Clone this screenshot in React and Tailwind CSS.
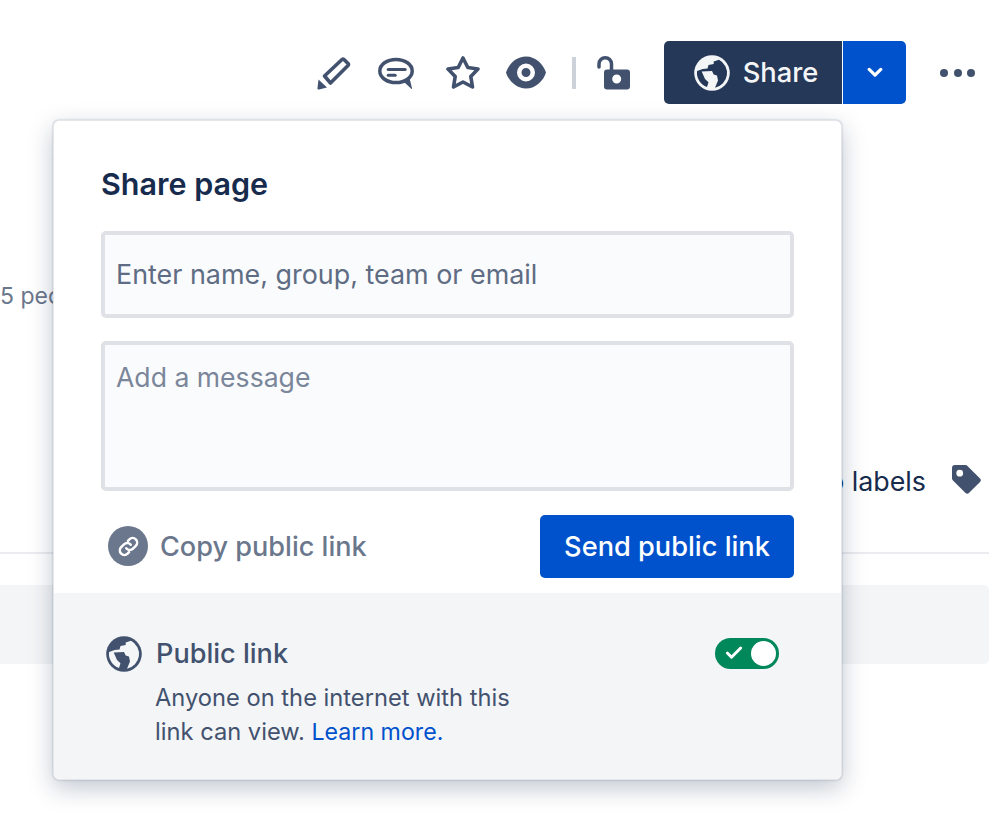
import { Check } from 'lucide-react';

function Globe({ className, land }) {
  // disc in currentColor, the lighter channel between the continents on top
  return (
    <svg viewBox="0 0 36 36" className={className}>
      <circle cx="18" cy="18" r="17.800" fill="currentColor" />
      <path
        fill={land}
        d="M25 4.700A15 15 0 0 1 21 32.700L24 25.600 23 20.400 19.700 19.400 18 16 7.700 16.500 11 24 14.500 27.300 13 32.100A15 15 0 0 1 3.100 16L8.700 14 13.500 13.500 14.500 10 19.700 9 19.700 6.600Z"
      />
    </svg>
  );
}

function ToolbarIcons() {
  return (
    <div className="flex items-center text-[#42526e]">
      <svg viewBox="0 0 34 34" className="w-[34px] h-[34px] ml-[317px]">
        <path fill="none" stroke="currentColor" strokeWidth="3.600" strokeLinejoin="round" d="M7.500 20 25 3.500a1.500 1.500 0 0 1 2 0l4 4a1.500 1.500 0 0 1 0 2L13.500 27z" />
        <path fill="currentColor" d="M1.500 23.500 10 31.500 2 33.500a1.200 1.200 0 0 1-1.500-1.500z" />
      </svg>
      <svg viewBox="0 0 36 34" className="w-[36px] h-[34px] ml-[27px]">
        <ellipse cx="18" cy="15" rx="16.200" ry="11.600" fill="none" stroke="currentColor" strokeWidth="3.500" />
        <path fill="currentColor" d="M25 25 33.500 33a.6.6 0 0 0 .5-.8L31.500 22z" />
        <rect x="8.700" y="12" width="20" height="3" rx="1.500" fill="currentColor" />
        <rect x="8.700" y="17.700" width="10" height="3" rx="1.500" fill="currentColor" />
      </svg>
      <svg viewBox="0 0 34 34" className="w-[34px] h-[34px] ml-[32px]">
        <path fill="none" stroke="currentColor" strokeWidth="3.600" strokeLinejoin="round" d="M17 2 21.800 11.500 32 13 24.800 20.500 26.500 31 17 26 7.500 31 9.200 20.500 2 13 12.200 11.500Z" />
      </svg>
      <svg viewBox="0 0 40 33" className="w-[40px] h-[33px] ml-[26px]">
        <path fill="currentColor" fillRule="evenodd" d="M20 .5c10 0 17.500 8 20 16-2.500 8-10 16-20 16s-17.500-8-20-16c2.500-8 10-16 20-16zm0 7a9 9 0 1 0 0 18 9 9 0 0 0 0-18zm0 4.500a4.500 4.500 0 1 1 0 9 4.500 4.500 0 0 1 0-9z" />
      </svg>
      <div className="w-[4px] h-[32px] ml-[26px] bg-[#ccd1da]" />
      <svg viewBox="0 0 33 34" className="w-[33px] h-[34px] ml-[21px]">
        <path fill="none" stroke="currentColor" strokeWidth="3.500" strokeLinecap="round" d="M2 11V8a6.200 6.200 0 0 1 12.500 0v6" />
        <path fill="currentColor" fillRule="evenodd" d="M10 13.500h20a3 3 0 0 1 3 3v14a3 3 0 0 1-3 3H10a3 3 0 0 1-3-3v-14a3 3 0 0 1 3-3zm9.700 5a4.500 4.500 0 1 0 0 9 4.500 4.500 0 0 0 0-9z" />
      </svg>
    </div>
  );
}

export default function App() {
  return (
    <div className="relative w-[999px] h-[822px] overflow-hidden bg-white font-['Inter',sans-serif]">
      {/* Toolbar */}
      <div className="flex items-center h-[63px] mt-[41px]">
        <ToolbarIcons />
        <button className="flex items-center justify-center gap-[13px] w-[178px] h-[63px] ml-[34px] pl-[6px] rounded-l-[5px] bg-[#253858] text-[#f4f5f7] text-[27.300px] font-medium">
          <Globe className="w-[36px] h-[36px] text-[#f4f5f7]" land="#253858" />
          <span className="mt-[2px]">Share</span>
        </button>
        <button className="flex items-center justify-center w-[63px] h-[63px] ml-[1px] rounded-r-[5px] bg-[#0052cc]">
          <svg viewBox="0 0 18 12" className="w-[16px] h-[11px]">
            <path fill="none" stroke="white" strokeWidth="3.600" strokeLinecap="round" strokeLinejoin="round" d="M2.500 2.500 9 9l6.500-6.500" />
          </svg>
        </button>
        <div className="flex gap-[5.500px] ml-[34px]">
          <span className="w-[8px] h-[8px] rounded-full bg-[#42526e]" />
          <span className="w-[8px] h-[8px] rounded-full bg-[#42526e]" />
          <span className="w-[8px] h-[8px] rounded-full bg-[#42526e]" />
        </div>
      </div>

      {/* Page content behind the popover */}
      <div className="pr-[10px]">
        <p className="mt-[178px] text-[23px] leading-[28px] text-[#6b778c]">5 people</p>
        <div className="flex items-center justify-end mt-[154px] h-[36px]">
          <span className="mt-[-2px] text-[26.800px] text-[#172b4d]">No labels</span>
          <svg viewBox="0 0 30 30" className="w-[29px] h-[29px] ml-[26px] mr-[8px] mt-[-5px]">
            <path fill="#42526e" fillRule="evenodd" d="M3 0h11a3 3 0 0 1 2 1l13 13a2.500 2.500 0 0 1 0 3.500L17.500 29a2.500 2.500 0 0 1-3.500 0L1 16a3 3 0 0 1-1-2V3a3 3 0 0 1 3-3zm5 5a3.500 3.500 0 1 0 0 7 3.500 3.500 0 0 0 0-7z" />
          </svg>
        </div>
        <div className="h-[2px] mt-[52px] bg-[#ebecf0]" />
        <div className="h-[79px] mt-[31px] rounded-r-[5px] bg-[#f4f5f7]" />
      </div>

      {/* Share popover */}
      <div className="absolute left-[53px] top-[120px] w-[789px] h-[660px] flex flex-col rounded-[6px] overflow-hidden bg-white border border-[#e4e6ea] shadow-[0_8px_24px_rgba(9,30,66,0.25),0_0_2px_rgba(9,30,66,0.31)]">
        <div className="flex-1 px-[47px]">
          <h2 className="mt-[43px] text-[30.500px] leading-[40px] font-semibold text-[#172b4d]">Share page</h2>
          <div className="flex items-center h-[87px] mt-[27px] px-[11px] rounded-[5px] border-[4px] border-[#dfe1e6] bg-[#fafbfc] text-[26.900px] text-[#5e6c84]">
            Enter name, group, team or email
          </div>
          <div className="h-[150px] mt-[23px] px-[11px] pt-[14px] rounded-[5px] border-[4px] border-[#dfe1e6] bg-[#fafbfc] text-[26.600px] leading-[36px] text-[#7a869a]">
            Add a message
          </div>
          <div className="flex items-center justify-between h-[63px] mt-[24px]">
            <div className="flex items-center gap-[12px] pl-[7px] text-[#6b778c]">
              <span className="flex items-center justify-center w-[40px] h-[40px] rounded-full bg-[#6b778c]">
                <svg viewBox="0 0 24 24" className="w-[27px] h-[27px]" fill="none" stroke="white" strokeWidth="2.200" strokeLinecap="round" strokeLinejoin="round">
                  <path d="M10 13.500a4 4 0 0 0 6 .4l2.500-2.500a4 4 0 0 0-5.700-5.700l-1.300 1.300" />
                  <path d="M14 10.500a4 4 0 0 0-6-.4l-2.500 2.500a4 4 0 0 0 5.700 5.700l1.300-1.300" />
                </svg>
              </span>
              <span className="mt-[2px] text-[27.100px] font-medium">Copy public link</span>
            </div>
            <button className="w-[254px] h-[63px] pt-[1px] rounded-[5px] bg-[#0052cc] text-white text-[27.200px] font-medium">
              Send public link
            </button>
          </div>
        </div>

        <div className="h-[186px] bg-[#f4f5f7] pl-[51px] pr-[62px] pt-[41px]">
          <div className="flex items-center justify-between">
            <div className="flex items-center gap-[14px] ml-[1px]">
              <Globe className="w-[36px] h-[36px] text-[#42526e]" land="#f4f5f7" />
              <span className="text-[27.100px] font-medium text-[#42526e]">Public link</span>
            </div>
            <div className="flex items-center justify-between w-[64px] h-[31px] mt-[-2px] px-[3px] rounded-full bg-[#00875a]">
              <Check className="w-[20px] h-[20px] ml-[6px] text-white" strokeWidth={3.500} />
              <span className="w-[25px] h-[25px] rounded-full bg-white" />
            </div>
          </div>
          <p className="mt-[6px] ml-[50px] text-[23.700px] leading-[34px] text-[#42526e]">
            Anyone on the internet with this
            <br />
            link can view. <span className="text-[23.200px] text-[#0052cc]">Learn more.</span>
          </p>
        </div>
      </div>
    </div>
  );
}
